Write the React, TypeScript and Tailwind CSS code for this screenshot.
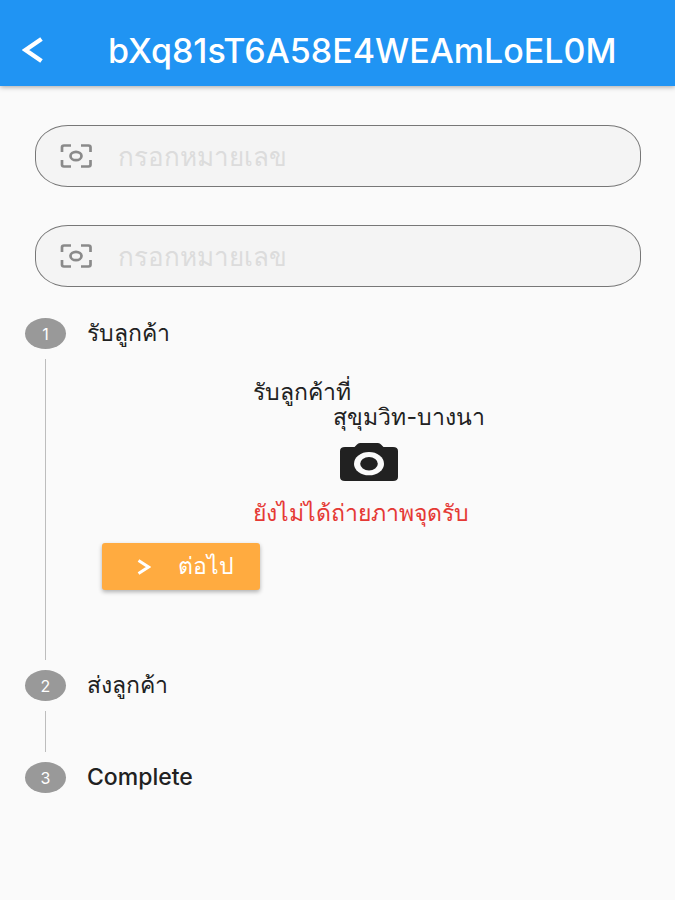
import React, { useState } from 'react';

type NumberFieldProps = {
  id: string;
  label: string;
};

const ScanIcon = () => (
  <svg
    className="h-6 w-8 shrink-0"
    viewBox="0 0 32 24"
    fill="none"
    stroke="#8a8a8a"
    strokeWidth="2.7"
    aria-hidden="true"
  >
    <path d="M2 8V3.2Q2 1.5 4 1.5H11M21 1.5h7.5q2 0 2 1.7V8M30.5 16v4.8q0 1.7-2 1.7H21M11 22.5H4q-2 0-2-1.7V16" />
    <ellipse cx="16" cy="12" rx="5.5" ry="4.2" />
  </svg>
);

const NumberField = ({ id, label }: NumberFieldProps) => {
  const [value, setValue] = useState('');

  return (
    <div className="flex h-[62px] items-center gap-[26px] rounded-[33px/27px] border border-[#777777] bg-[#f4f4f4] px-6">
      <ScanIcon />
      <input
        id={id}
        type="text"
        aria-label={label}
        placeholder={label}
        value={value}
        onChange={(e) => setValue(e.target.value)}
        className="min-w-0 flex-1 bg-transparent text-[26px] text-[#212121] outline-none placeholder:text-[#dcdcdc]"
      />
    </div>
  );
};

const StepHeader = ({ step, title }: { step: number; title: string }) => (
  <div className="flex h-[31px] items-center gap-[21px]">
    <span className="flex h-[31px] w-[41px] shrink-0 items-center justify-center rounded-[50%] bg-[#999999] text-[16px] text-white">
      {step}
    </span>
    <h2 className="text-[23px] font-medium text-[#212121]">{title}</h2>
  </div>
);

const App = () => {
  return (
    <div className="min-h-screen bg-[#fafafa] font-['Inter','DejaVu_Sans',sans-serif] text-[#212121]">
      <header className="flex h-[86px] items-center bg-[#2094f3] pt-[14px] pl-[22px] text-white shadow-[0_1px_5px_rgba(0,0,0,0.35)]">
        <button type="button" aria-label="Back" className="w-[86px] shrink-0">
          <svg className="h-[26px] w-[21px]" viewBox="0 0 21 26" fill="none" stroke="white" strokeWidth="4.4" aria-hidden="true">
            <path d="M19.5 2L3.5 13l16 11" />
          </svg>
        </button>
        <h1 className="text-[34px] font-medium whitespace-nowrap">bXq81sT6A58E4WEAmLoEL0M</h1>
      </header>

      <main>
        <div className="flex flex-col gap-[38px] pt-[39px] pr-[34px] pl-[35px]">
          <NumberField id="first-number" label="กรอกหมายเลข" />
          <NumberField id="second-number" label="กรอกหมายเลข" />
        </div>

        <ol className="pt-[31px] pr-[39px] pl-[25px]">
          <li>
            <StepHeader step={1} title="รับลูกค้า" />
            <div className="my-[10px] flex min-h-[301px]">
              <div className="mr-9 ml-5 w-px shrink-0 bg-[#bdbdbd]" />
              <div className="flex-1 pl-5">
                <div className="mx-auto flex w-[232px] flex-col pt-[21px] text-[23px] leading-[25px] whitespace-nowrap">
                  <p>รับลูกค้าที่</p>
                  <p className="self-end">สุขุมวิท-บางนา</p>
                  <button type="button" aria-label="ถ่ายภาพ" className="mt-[13px] self-center">
                    <svg className="h-[38px] w-[58px]" viewBox="0 0 58 38" aria-hidden="true">
                      <path
                        fill="#212121"
                        d="M20 0h18q2 0 3 1.5L43.5 4H53q5 0 5 4v26q0 4-5 4H5q-5 0-5-4V8q0-4 5-4h9.500L17 1.500Q18 0 20 0z"
                      />
                      <ellipse cx="29" cy="20.700" rx="15" ry="11.600" fill="#fafafa" />
                      <ellipse cx="29" cy="20.700" rx="8.800" ry="6.800" fill="#212121" />
                    </svg>
                  </button>
                  <p className="mt-5 text-[#e53935]">ยังไม่ได้ถ่ายภาพจุดรับ</p>
                </div>
                <button
                  type="button"
                  className="mt-[17px] flex h-[47px] w-[158px] items-center gap-[27px] rounded-[3px] bg-[#ffab40] pl-[35px] text-[23px] font-medium text-white shadow-[0_2px_4px_rgba(0,0,0,0.3)]"
                >
                  <svg className="h-4 w-3.5" viewBox="0 0 14 16" fill="none" stroke="white" strokeWidth="3" aria-hidden="true">
                    <path d="M1.500 1.500L11.500 8 1.500 14.500" />
                  </svg>
                  ต่อไป
                </button>
              </div>
            </div>
          </li>
          <li>
            <StepHeader step={2} title="ส่งลูกค้า" />
            <div className="my-[10px] ml-5 h-[41px] w-px bg-[#bdbdbd]" />
          </li>
          <li>
            <StepHeader step={3} title="Complete" />
          </li>
        </ol>
      </main>
    </div>
  );
};

export default App;
